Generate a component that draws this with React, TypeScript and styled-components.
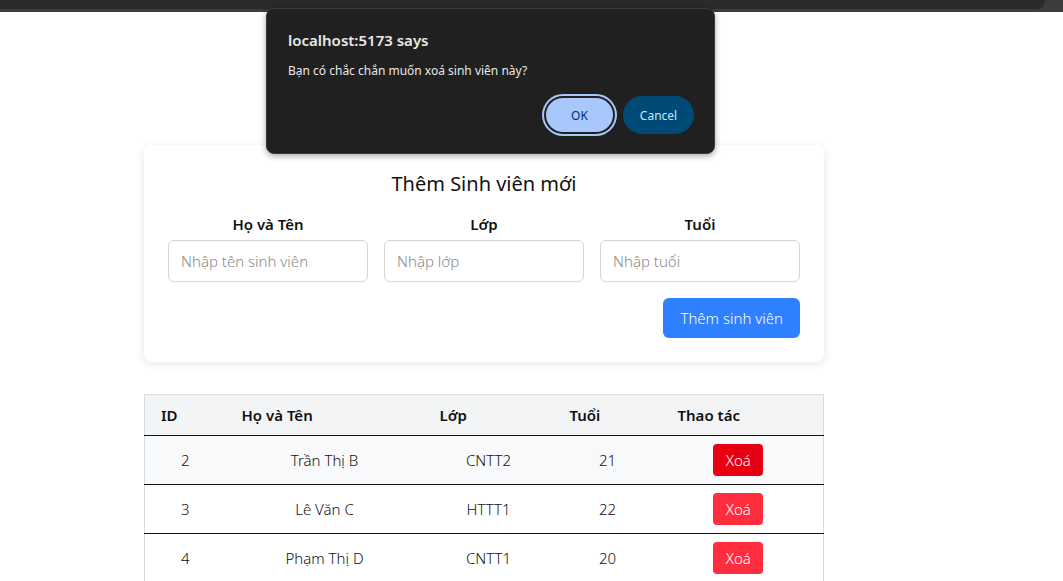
import { FC } from 'react'
import styled, { createGlobalStyle } from 'styled-components'

type Student = {
  id: number
  name: string
  className: string
  age: number
}

const students: Student[] = [
  { id: 2, name: 'Trần Thị B', className: 'CNTT2', age: 21 },
  { id: 3, name: 'Lê Văn C', className: 'HTTT1', age: 22 },
  { id: 4, name: 'Phạm Thị D', className: 'CNTT1', age: 20 },
]

const App: FC = () => {
  return (
    <>
      <GlobalStyle />
      <TopStrip>
        <TopStripInner />
      </TopStrip>

      <Page>
        <Card>
          <CardTitle>Thêm Sinh viên mới</CardTitle>
          <FormGrid>
            <Field>
              <Label>Họ và Tên</Label>
              <Input placeholder="Nhập tên sinh viên" />
            </Field>
            <Field>
              <Label>Lớp</Label>
              <Input placeholder="Nhập lớp" />
            </Field>
            <Field>
              <Label>Tuổi</Label>
              <Input placeholder="Nhập tuổi" />
            </Field>
          </FormGrid>
          <Actions>
            <PrimaryButton>Thêm sinh viên</PrimaryButton>
          </Actions>
        </Card>

        <Table>
          <colgroup>
            <col style={{ width: 81 }} />
            <col style={{ width: 198 }} />
            <col style={{ width: 130 }} />
            <col style={{ width: 108 }} />
            <col />
          </colgroup>
          <thead>
            <tr>
              <Th>ID</Th>
              <Th>Họ và Tên</Th>
              <Th>Lớp</Th>
              <Th>Tuổi</Th>
              <Th>Thao tác</Th>
            </tr>
          </thead>
          <tbody>
            {students.map((s, i) => (
              <Row key={s.id} $hover={i === 0}>
                <Td>{s.id}</Td>
                <Td>{s.name}</Td>
                <Td>{s.className}</Td>
                <Td>{s.age}</Td>
                <ActionTd>
                  <DeleteButton $hover={i === 0}>Xoá</DeleteButton>
                </ActionTd>
              </Row>
            ))}
          </tbody>
        </Table>
      </Page>

      <Dialog>
        <DialogTitle>localhost:5173 says</DialogTitle>
        <DialogMessage>Bạn có chắc chắn muốn xoá sinh viên này?</DialogMessage>
        <DialogButtons>
          <OkButton>OK</OkButton>
          <CancelButton>Cancel</CancelButton>
        </DialogButtons>
      </Dialog>
    </>
  )
}

const GlobalStyle = createGlobalStyle`
  * {
    box-sizing: border-box;
  }
  body {
    margin: 0;
    background: #fff;
    color: #111;
    font-family: 'Noto Sans', 'Open Sans', sans-serif;
    overflow: hidden;
  }
`

const TopStrip = styled.div`
  position: absolute;
  top: 0;
  left: 0;
  right: 0;
  height: 12px;
  background: #3c3c3c;
`

const TopStripInner = styled.div`
  width: calc(100% - 18px);
  height: 9px;
  background: #2a2a2a;
  border-bottom-right-radius: 8px;
`

const Page = styled.div`
  width: 680px;
  margin-left: 144px;
  padding-top: 145px;
`

const Card = styled.div`
  background: #fff;
  border-radius: 8px;
  padding: 24px;
  box-shadow: 0 2px 8px rgba(0, 0, 0, 0.1);
`

const CardTitle = styled.h2`
  margin: 0 0 15px;
  font-size: 20px;
  font-weight: 400;
  line-height: 30px;
  text-align: center;
`

const FormGrid = styled.div`
  display: grid;
  grid-template-columns: repeat(3, 1fr);
  gap: 16px;
`

const Field = styled.div`
  display: flex;
  flex-direction: column;
  align-items: center;
  gap: 6px;
`

const Label = styled.label`
  font-size: 15px;
  font-weight: 600;
  line-height: 20px;
`

const Input = styled.input`
  width: 100%;
  height: 42px;
  padding: 0 12px;
  border: 1px solid #d1d5db;
  border-radius: 6px;
  font-family: inherit;
  font-size: 15px;
  font-weight: 300;
  outline: none;

  &::placeholder {
    color: #8a8a8a;
  }
`

const Actions = styled.div`
  display: flex;
  justify-content: flex-end;
  margin-top: 16px;
`

const PrimaryButton = styled.button`
  height: 40px;
  padding: 0 17px;
  border: none;
  border-radius: 6px;
  background: #2f80ff;
  color: #fff;
  font-family: inherit;
  font-size: 15px;
  font-weight: 300;
`

const Table = styled.table`
  width: 100%;
  margin-top: 32px;
  border-collapse: collapse;
  table-layout: fixed;
  border-left: 1px solid #d8dce2;
  border-right: 1px solid #d8dce2;
  font-size: 15px;
`

const Th = styled.th`
  height: 41px;
  padding: 0 16px;
  text-align: left;
  font-weight: 600;
  background: #f3f4f6;
  border-top: 1px solid #d8dce2;
  border-bottom: 1px solid #111;
`

const Row = styled.tr<{ $hover: boolean }>`
  background: ${({ $hover }) => ($hover ? '#f8f9fb' : '#fff')};
`

const Td = styled.td`
  height: 49px;
  padding: 0 16px;
  text-align: center;
  font-weight: 300;
  border-bottom: 1px solid #111;
`

const ActionTd = styled(Td)`
  padding: 0 24px 0 16px;
`

const DeleteButton = styled.button<{ $hover: boolean }>`
  width: 50px;
  height: 32px;
  border: none;
  border-radius: 4px;
  background: ${({ $hover }) => ($hover ? '#e60012' : '#ff2e3f')};
  color: #fff;
  font-family: inherit;
  font-size: 15px;
  font-weight: 300;
`

const Dialog = styled.div`
  position: absolute;
  top: 8px;
  left: 266px;
  width: 449px;
  height: 146px;
  padding: 20px 20px 0 21px;
  background: #202020;
  border: 1px solid #3a3a3a;
  border-radius: 8px;
  box-shadow: 0 2px 6px rgba(0, 0, 0, 0.35);
  color: #e8e8e8;
`

const DialogTitle = styled.div`
  font-size: 15px;
  font-weight: 600;
  line-height: 22px;
`

const DialogMessage = styled.div`
  margin-top: 12px;
  font-size: 12px;
  line-height: 16px;
`

const DialogButtons = styled.div`
  display: flex;
  justify-content: flex-end;
  gap: 10px;
  margin-top: 17px;
`

const OkButton = styled.button`
  width: 67px;
  height: 34px;
  margin: 2px 0;
  border: none;
  border-radius: 17px;
  background: #a8c7fa;
  color: #062e6f;
  box-shadow: 0 0 0 2px #202020, 0 0 0 4px #a8c7fa;
  font-family: inherit;
  font-size: 12px;
`

const CancelButton = styled.button`
  width: 71px;
  height: 38px;
  border: none;
  border-radius: 19px;
  background: #004a77;
  color: #c2e7ff;
  font-family: inherit;
  font-size: 12px;
`

export default App
